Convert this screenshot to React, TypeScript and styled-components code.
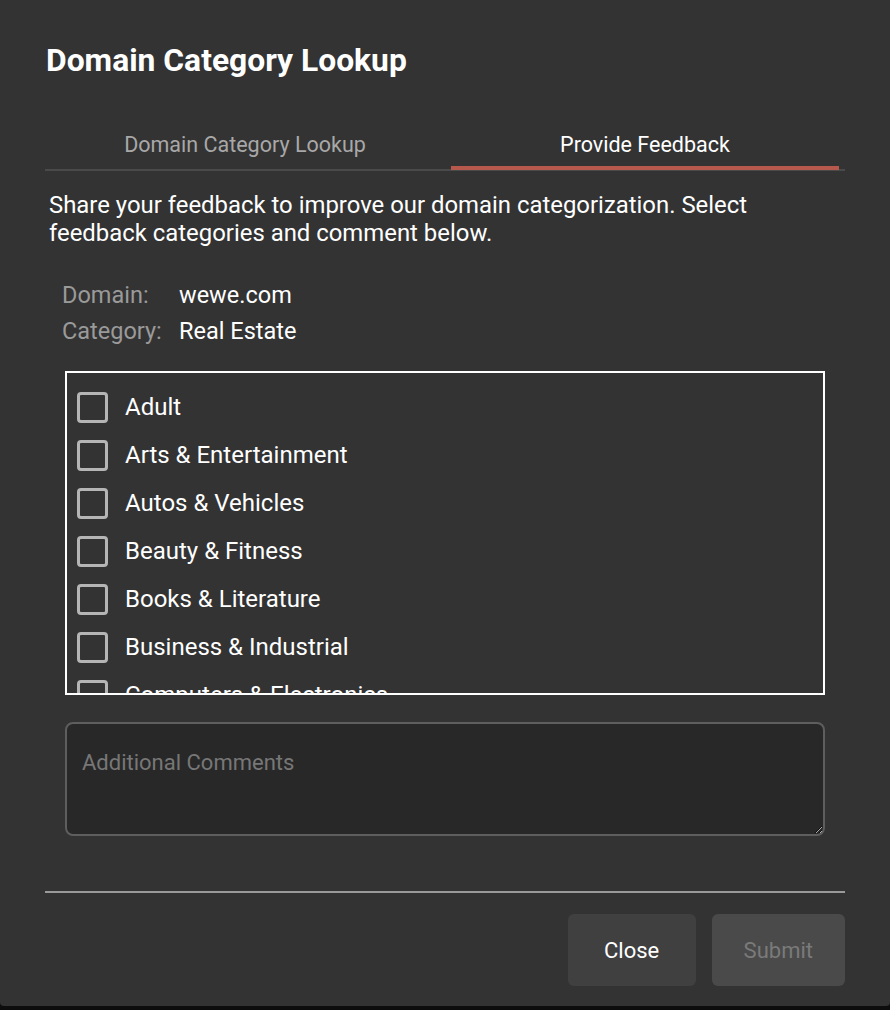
import styled, { createGlobalStyle } from "styled-components"

const categories = [
    "Adult",
    "Arts & Entertainment",
    "Autos & Vehicles",
    "Beauty & Fitness",
    "Books & Literature",
    "Business & Industrial",
    "Computers & Electronics",
    "Finance",
    "Food & Drink",
    "Games",
]

const GlobalStyle = createGlobalStyle`
    html, body {
        margin: 0;
        padding: 0;
        background: #0d0d0d;
        font-family: Roboto, "Liberation Sans", sans-serif;
    }
    * { box-sizing: border-box; }
`

const App = () => {
    return (
        <>
            <GlobalStyle />
            <Dialog>
                <Title>Domain Category Lookup</Title>
                <Tabs>
                    <Tab>Domain Category Lookup</Tab>
                    <Tab active>Provide Feedback</Tab>
                </Tabs>
                <Intro>
                    Share your feedback to improve our domain categorization. Select feedback categories and comment below.
                </Intro>
                <Info>
                    <span className="label">Domain:</span>
                    <span className="value">wewe.com</span>
                    <span className="label">Category:</span>
                    <span className="value">Real Estate</span>
                </Info>
                <CategoryList>
                    {categories.map((c) => (
                        <CheckRow key={c}>
                            <input type="checkbox" />
                            <span className="box" />
                            <span>{c}</span>
                        </CheckRow>
                    ))}
                </CategoryList>
                <Comments placeholder="Additional Comments" />
                <Footer>
                    <Button>Close</Button>
                    <Button disabled>Submit</Button>
                </Footer>
            </Dialog>
        </>
    )
}

export default App

const Dialog = styled.div`
    width: 890px;
    height: 1006px;
    background: #333333;
    border-radius: 0 0 4px 4px;
    padding: 42px 45px 0;
    display: flex;
    flex-direction: column;
`

const Title = styled.h2`
    margin: 0;
    color: #ffffff;
    font-size: 31.8px;
    font-weight: 700;
    line-height: 36px;
    padding-left: 1px;
`

const Tabs = styled.div`
    display: grid;
    grid-template-columns: 1fr 1fr;
    margin-top: 53px;
    border-bottom: 2px solid #4a4a4a;
`

const Tab = styled.div<{ active?: boolean }>`
    position: relative;
    text-align: center;
    font-size: 21.5px;
    line-height: 28px;
    padding-bottom: 10px;
    color: ${(p) => (p.active ? "#ffffff" : "#a8a8a8")};

    &::after {
        content: "";
        display: ${(p) => (p.active ? "block" : "none")};
        position: absolute;
        left: 6px;
        right: 6px;
        bottom: -1px;
        height: 4px;
        background: #b6584b;
    }
`

const Intro = styled.p`
    margin: 20px 0 0;
    padding-left: 4px;
    color: #ffffff;
    font-size: 23.9px;
    line-height: 28px;
    max-width: 760px;
`

const Info = styled.div`
    display: grid;
    grid-template-columns: 117px auto;
    row-gap: 8px;
    margin: 34px 0 0 17px;
    font-size: 23.5px;
    line-height: 28px;

    .label { color: #9a9a9a; }
    .value { color: #ffffff; }
`

const CategoryList = styled.div`
    margin: 26px 20px 0;
    height: 324px;
    border: 2px solid #ffffff;
    padding: 10px 10px 0;
    overflow-y: auto;
    scrollbar-width: none;
    &::-webkit-scrollbar { display: none; }
`

const CheckRow = styled.label`
    display: flex;
    align-items: center;
    gap: 17px;
    height: 48px;
    color: #ffffff;
    font-size: 24px;
    cursor: pointer;

    input { display: none; }

    .box {
        width: 31px;
        height: 31px;
        flex: none;
        border: 3px solid #b5b5b5;
        border-radius: 4px;
    }
`

const Comments = styled.textarea`
    margin: 27px 20px 0;
    height: 114px;
    background: #282828;
    border: 2px solid #5e5e5e;
    border-radius: 8px;
    padding: 25px 15px;
    color: #ffffff;
    font-family: Roboto, "Liberation Sans", sans-serif;
    font-size: 22px;
    line-height: 28px;
    resize: vertical;
    outline: none;

    &::placeholder { color: #777777; }
`

const Footer = styled.div`
    margin-top: 55px;
    border-top: 2px solid #9a9a9a;
    padding-top: 21px;
    display: flex;
    justify-content: flex-end;
    gap: 16px;
`

const Button = styled.button`
    height: 72px;
    min-width: 128px;
    padding: 0 32px;
    border: none;
    border-radius: 6px;
    background: ${(p) => (p.disabled ? "#4a4a4a" : "#404040")};
    color: ${(p) => (p.disabled ? "#7a7a7a" : "#ffffff")};
    font-family: Roboto, "Liberation Sans", sans-serif;
    font-size: 22px;
    cursor: ${(p) => (p.disabled ? "default" : "pointer")};
`
